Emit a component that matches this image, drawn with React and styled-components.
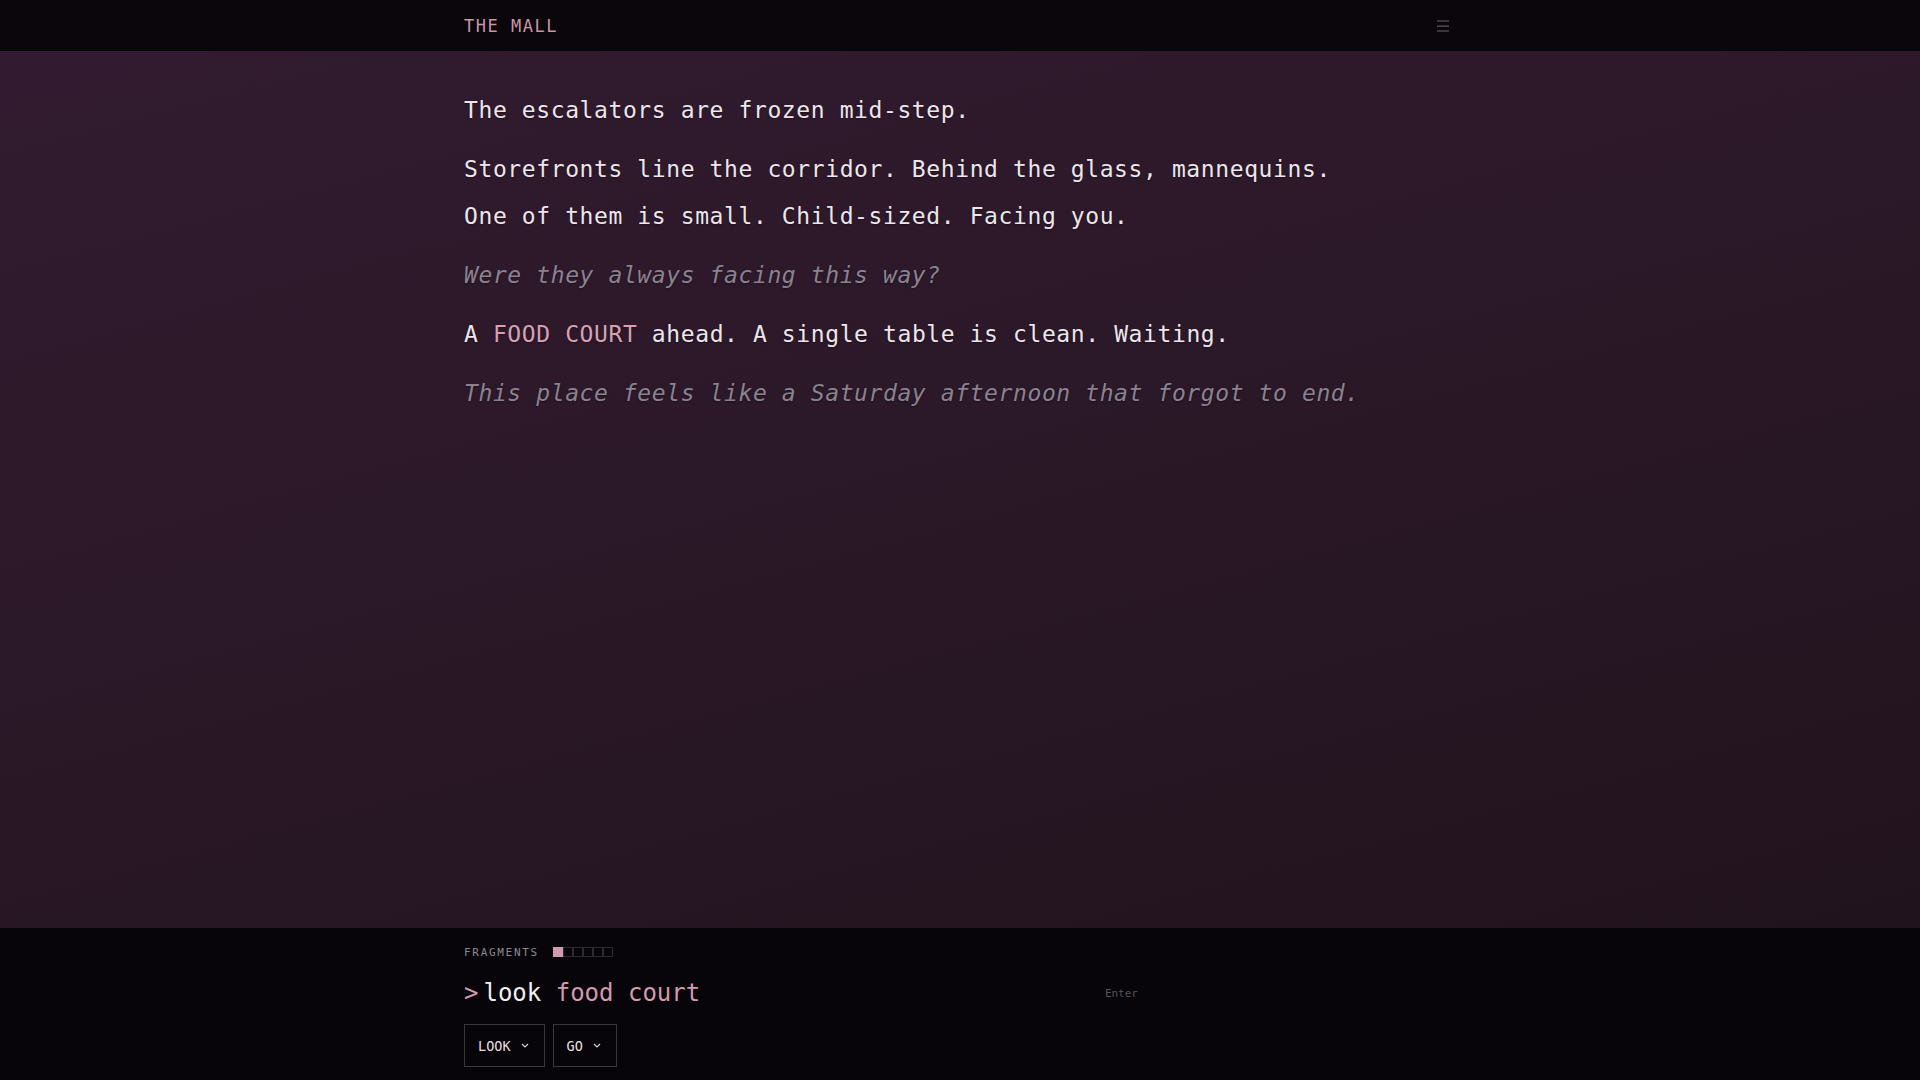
import React, { useState } from "react";
import styled, { createGlobalStyle } from "styled-components";

const GlobalStyle = createGlobalStyle`
  html, body {
    margin: 0;
    padding: 0;
    background: #070509;
  }
  * {
    box-sizing: border-box;
  }
`;

const MONO = `"DejaVu Sans Mono", "Liberation Mono", monospace`;

const Page = styled.div`
  display: flex;
  flex-direction: column;
  height: 100vh;
  font-family: ${MONO};
  color: #ece6ea;
`;

const TopBar = styled.header`
  height: 51px;
  flex-shrink: 0;
  background: #0a060b;
`;

const Inner = styled.div`
  max-width: 1024px;
  margin: 0 auto;
  padding: 0 16px;
  height: 100%;
  display: flex;
  align-items: center;
  justify-content: space-between;
`;

const Title = styled.h1`
  margin: 0;
  font-size: 17px;
  font-weight: 400;
  letter-spacing: 1.5px;
  color: #c994a5;
`;

const MenuButton = styled.button`
  background: none;
  border: 0;
  padding: 8px;
  margin-right: -1px;
  display: flex;
  cursor: pointer;
`;

const Story = styled.main`
  flex: 1;
  background: linear-gradient(165deg, #321b30 0%, #2b1828 45%, #21131d 100%);
`;

const StoryInner = styled.div`
  max-width: 1024px;
  margin: 0 auto;
  padding: 36px 16px 0;
`;

const Line = styled.p`
  margin: 0 0 11.3px;
  font-size: 23px;
  letter-spacing: 0.6px;
  line-height: 47.5px;
  color: ${(p) => (p.$whisper ? "#8a8290" : "#ece6ea")};
  font-style: ${(p) => (p.$whisper ? "italic" : "normal")};
  text-shadow: 0 1px 2px rgba(0, 0, 0, 0.35);
`;

const Hot = styled.span`
  color: #d7a1b1;
`;

const Console = styled.footer`
  height: 152px;
  flex-shrink: 0;
  background: #070509;
`;

const ConsoleInner = styled.div`
  max-width: 1024px;
  margin: 0 auto;
  padding: 16px 16px 0;
`;

const Fragments = styled.div`
  display: flex;
  align-items: center;
  gap: 14px;
  height: 16px;
`;

const FragLabel = styled.span`
  font-size: 11px;
  letter-spacing: 1.7px;
  color: #8c8790;
`;

const Cells = styled.div`
  display: flex;
`;

const Cell = styled.span`
  width: 10px;
  height: 10px;
  border: 1px solid ${(p) => (p.$on ? "#d29aac" : "#2e2a30")};
  background: ${(p) => (p.$on ? "#d29aac" : "transparent")};
`;

const PromptRow = styled.div`
  display: flex;
  align-items: center;
  width: 680px;
  height: 32px;
  margin-top: 17px;
`;

const Caret = styled.span`
  font-size: 24px;
  color: #d29aac;
  margin-right: 5px;
`;

const Command = styled.div`
  flex: 1;
  font-size: 24px;
  color: #f2eef0;
  white-space: pre;
`;

const Arg = styled.span`
  color: #d29aac;
`;

const Hint = styled.span`
  font-size: 11px;
  color: #56525a;
  margin-right: 6px;
`;

const Verbs = styled.div`
  display: flex;
  gap: 8px;
  margin-top: 15px;
`;

const Verb = styled.button`
  height: 43px;
  padding: 0 15px 0 13px;
  display: flex;
  align-items: center;
  gap: 10px;
  background: transparent;
  border: 1px solid #3a3639;
  color: #e4dfe2;
  font-family: ${MONO};
  font-size: 13.5px;
  cursor: pointer;
`;

const Chevron = () => (
  <svg width="8" height="5" viewBox="0 0 8 5" fill="none">
    <path d="M1 1l3 3 3-3" stroke="#d8d3d6" strokeWidth="1.1" />
  </svg>
);

const Burger = () => (
  <svg width="12" height="12" viewBox="0 0 12 12">
    <rect x="0" y="0.5" width="12" height="1" fill="#6a656c" />
    <rect x="0" y="5.5" width="12" height="1.3" fill="#5a565c" />
    <rect x="0" y="10.5" width="12" height="1" fill="#6a656c" />
  </svg>
);

const App = () => {
  const [found] = useState(1);
  return (
    <Page>
      <GlobalStyle />
      <TopBar>
        <Inner>
          <Title>THE MALL</Title>
          <MenuButton aria-label="menu">
            <Burger />
          </MenuButton>
        </Inner>
      </TopBar>

      <Story>
        <StoryInner>
          <Line>The escalators are frozen mid-step.</Line>
          <Line>
            Storefronts line the corridor. Behind the glass, mannequins.
            <br />
            One of them is small. Child-sized. Facing you.
          </Line>
          <Line $whisper>Were they always facing this way?</Line>
          <Line>
            A <Hot>FOOD COURT</Hot> ahead. A single table is clean. Waiting.
          </Line>
          <Line $whisper>This place feels like a Saturday afternoon that forgot to end.</Line>
        </StoryInner>
      </Story>

      <Console>
        <ConsoleInner>
          <Fragments>
            <FragLabel>FRAGMENTS</FragLabel>
            <Cells>
              {[0, 1, 2, 3, 4, 5].map((i) => (
                <Cell key={i} $on={i < found} />
              ))}
            </Cells>
          </Fragments>
          <PromptRow>
            <Caret>&gt;</Caret>
            <Command>
              look <Arg>food court</Arg>
            </Command>
            <Hint>Enter</Hint>
          </PromptRow>
          <Verbs>
            <Verb>
              LOOK <Chevron />
            </Verb>
            <Verb>
              GO <Chevron />
            </Verb>
          </Verbs>
        </ConsoleInner>
      </Console>
    </Page>
  );
};

export default App;
